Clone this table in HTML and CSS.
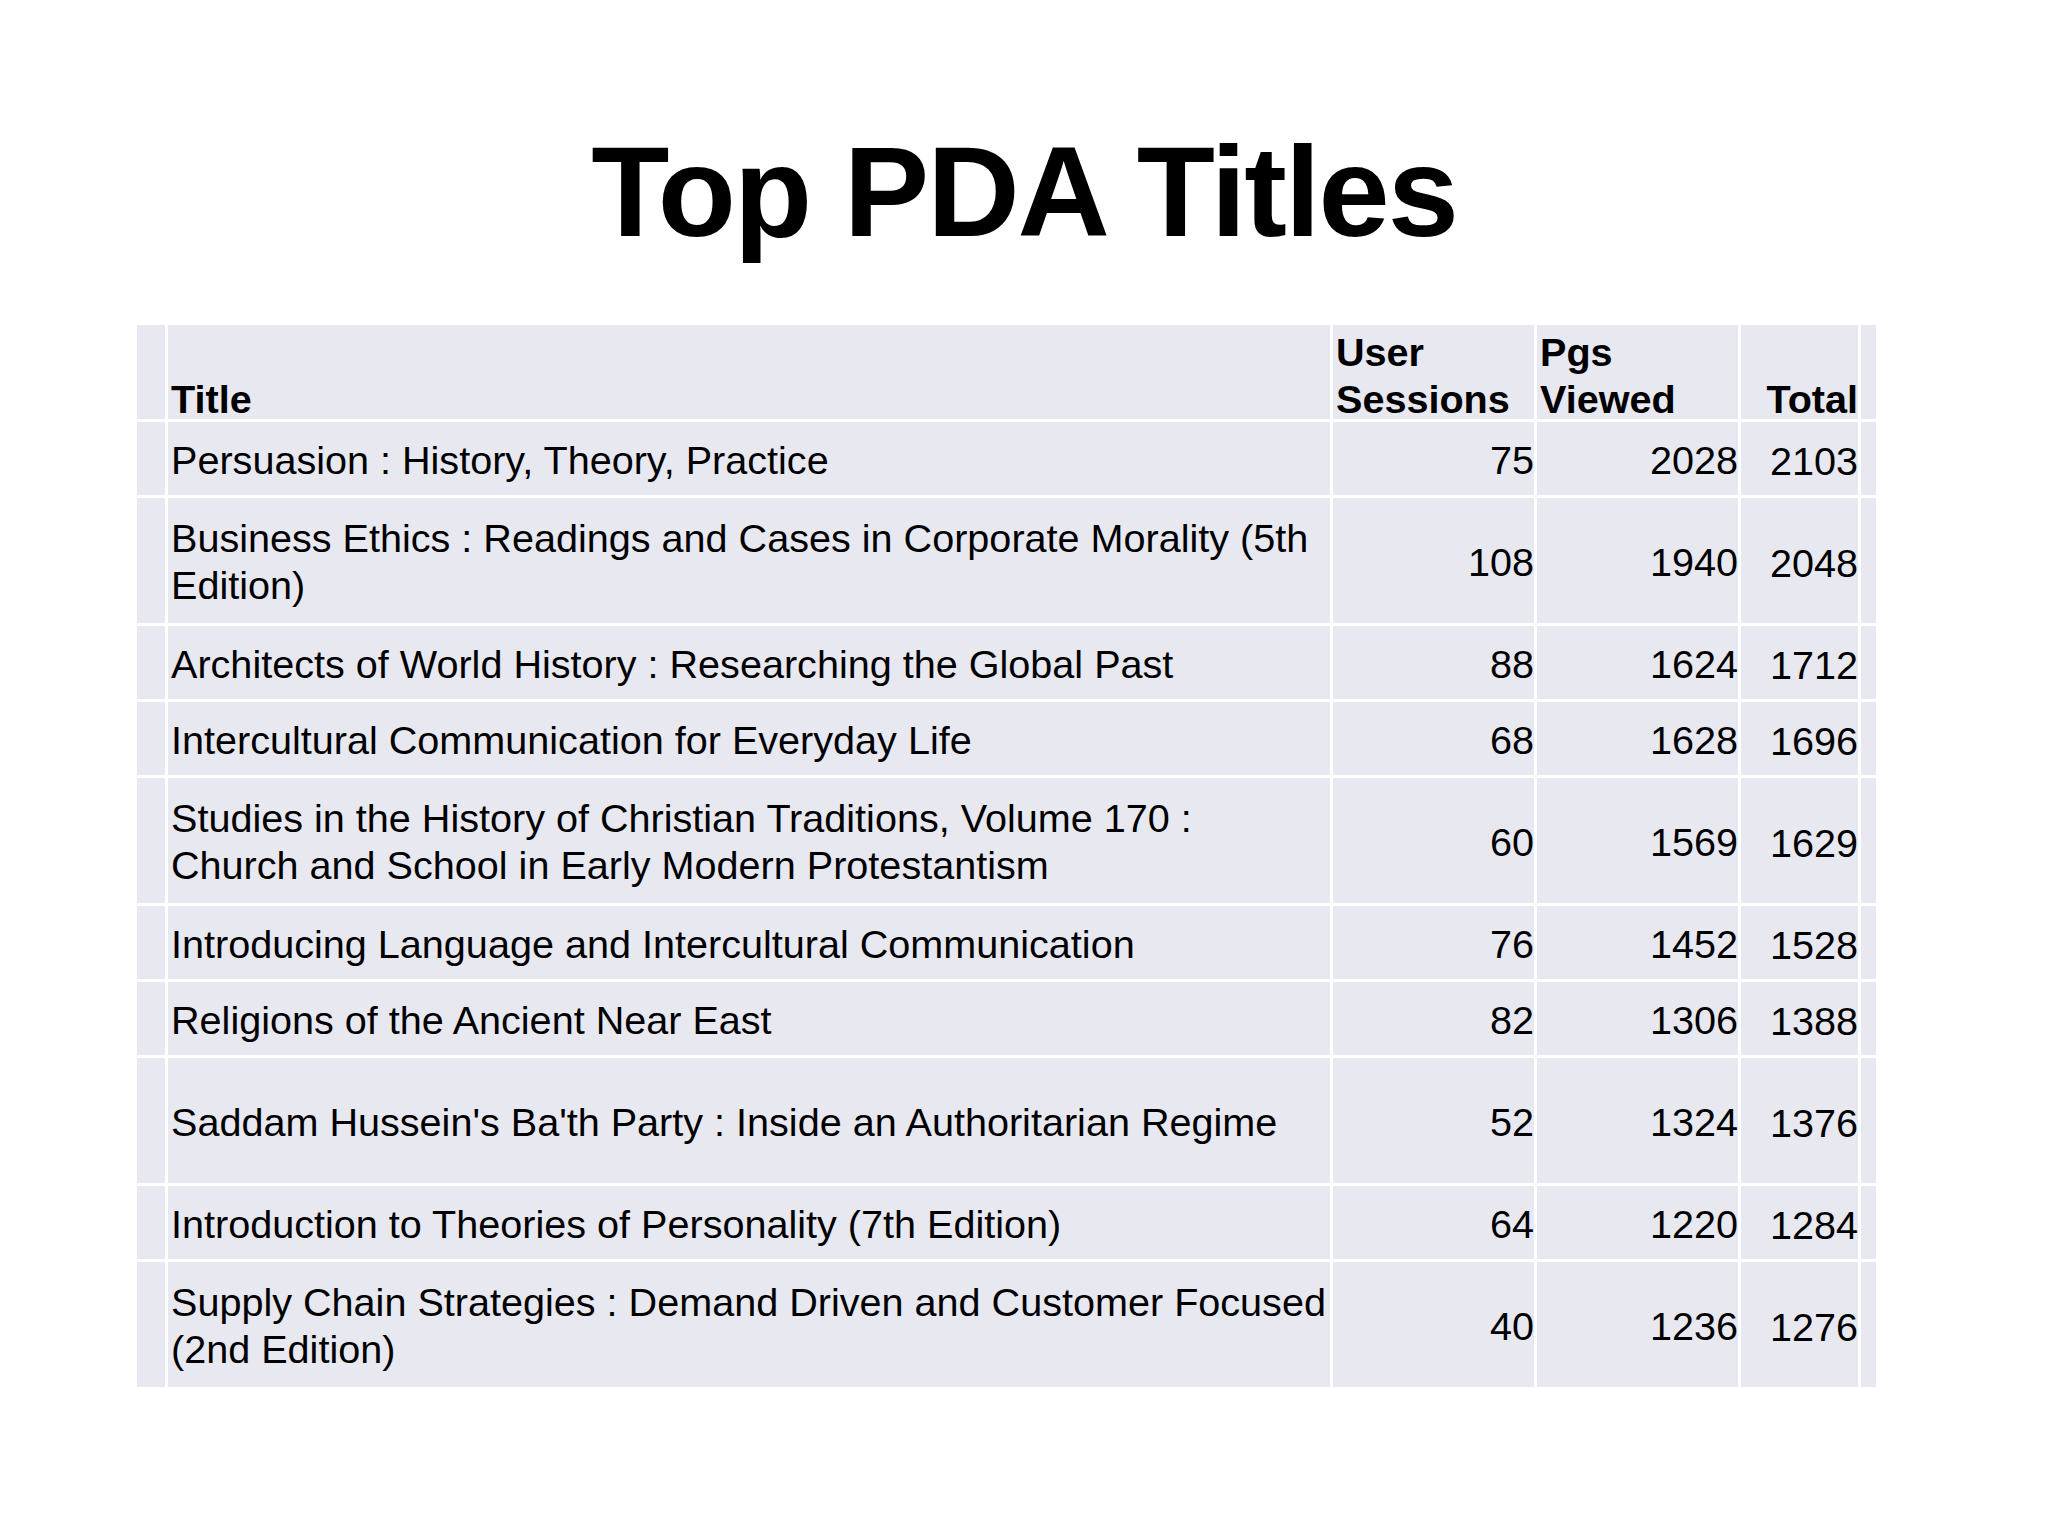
FILE: index.html
```html
<!DOCTYPE html>
<html>
<head>
<meta charset="utf-8">
<link rel="stylesheet" href="styles.css">
</head>
<body>
<div class="slide">
  <h1 class="title">Top PDA Titles</h1>
  <table class="pda">
    <colgroup>
      <col class="c-edge">
      <col class="c-title">
      <col class="c-num">
      <col class="c-num">
      <col class="c-total">
      <col class="c-end">
    </colgroup>
    <thead>
      <tr class="head">
        <th></th>
        <th class="t"><div class="hd">Title</div></th>
        <th class="n"><div class="hd">User<br>Sessions</div></th>
        <th class="n"><div class="hd">Pgs<br>Viewed</div></th>
        <th class="tot"><div class="hd">Total</div></th>
        <th></th>
      </tr>
    </thead>
    <tbody>
      <tr class="r1"><td></td><td class="t">Persuasion : History, Theory, Practice</td><td class="n">75</td><td class="n">2028</td><td class="tot">2103</td><td></td></tr>
      <tr class="r2"><td></td><td class="t">Business Ethics : Readings and Cases in Corporate Morality (5th Edition)</td><td class="n">108</td><td class="n">1940</td><td class="tot">2048</td><td></td></tr>
      <tr class="r1"><td></td><td class="t">Architects of World History : Researching the Global Past</td><td class="n">88</td><td class="n">1624</td><td class="tot">1712</td><td></td></tr>
      <tr class="r1"><td></td><td class="t">Intercultural Communication for Everyday Life</td><td class="n">68</td><td class="n">1628</td><td class="tot">1696</td><td></td></tr>
      <tr class="r2"><td></td><td class="t">Studies in the History of Christian Traditions, Volume 170 : Church and School in Early Modern Protestantism</td><td class="n">60</td><td class="n">1569</td><td class="tot">1629</td><td></td></tr>
      <tr class="r1"><td></td><td class="t">Introducing Language and Intercultural Communication</td><td class="n">76</td><td class="n">1452</td><td class="tot">1528</td><td></td></tr>
      <tr class="r1"><td></td><td class="t">Religions of the Ancient Near East</td><td class="n">82</td><td class="n">1306</td><td class="tot">1388</td><td></td></tr>
      <tr class="r2"><td></td><td class="t">Saddam Hussein's Ba'th Party : Inside an Authoritarian Regime</td><td class="n">52</td><td class="n">1324</td><td class="tot">1376</td><td></td></tr>
      <tr class="r1"><td></td><td class="t">Introduction to Theories of Personality (7th Edition)</td><td class="n">64</td><td class="n">1220</td><td class="tot">1284</td><td></td></tr>
      <tr class="r2"><td></td><td class="t">Supply Chain Strategies : Demand Driven and Customer Focused (2nd Edition)</td><td class="n">40</td><td class="n">1236</td><td class="tot">1276</td><td></td></tr>
    </tbody>
  </table>
</div>
</body>
</html>
```

FILE: styles.css
```css
html, body {
  margin: 0;
  padding: 0;
  background: #ffffff;
}

.slide {
  width: 2048px;
  height: 1536px;
  padding-top: 128px;
  box-sizing: border-box;
  font-family: "Liberation Sans", Arial, sans-serif;
  color: #000000;
}

.title {
  margin: 0;
  text-align: center;
  font-size: 128px;
  line-height: 128px;
  font-weight: bold;
  letter-spacing: -2px;
}

.pda {
  margin: 66px 0 0 134px;
  border-collapse: separate;
  border-spacing: 3px;
  table-layout: fixed;
  width: 1745px;
  font-size: 39.6px;
  line-height: 47px;
}

.c-edge { width: 28px; }
.c-title { width: 1162px; }
.c-num { width: 201px; }
.c-total { width: 117px; }
.c-end { width: 15px; }

.pda th,
.pda td {
  background: #e8e8f1;
  padding: 3px 0 0 3px;
  vertical-align: middle;
}

.pda th {
  vertical-align: bottom;
  text-align: left;
  font-weight: bold;
  padding: 0 0 0 3px;
  line-height: 47px;
}

.hd {
  margin-bottom: -4px;
}

.head { height: 94px; }
.r1 { height: 73px; }
.r2 { height: 125px; }

.pda .t { text-align: left; }
.pda .n { text-align: right; }
.pda th.n { text-align: left; }
.pda .tot { text-align: right; padding-top: 6px; }
.pda th.tot { padding-top: 0; }
```
